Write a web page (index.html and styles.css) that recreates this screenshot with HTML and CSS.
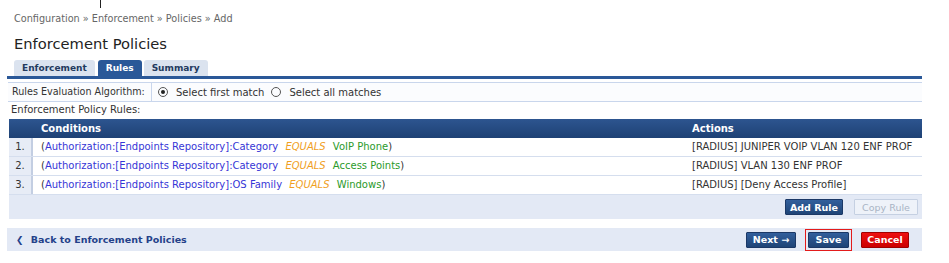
FILE: index.html
```html
<!DOCTYPE html>
<html lang="en">

<head>
  <meta charset="UTF-8">
  <title>Enforcement Policies</title>
  <link rel="stylesheet" href="styles.css">
</head>

<body>
  <div class="cursor-mark"></div>

  <div class="crumbs">Configuration &raquo; Enforcement &raquo; Policies &raquo; Add</div>
  <h2 class="page-title">Enforcement Policies</h2>

  <div class="tabs">
    <div class="tab">Enforcement</div>
    <div class="tab active">Rules</div>
    <div class="tab">Summary</div>
  </div>

  <div class="algo-row">
    <div class="algo-label">Rules Evaluation Algorithm:</div>
    <div class="algo-options">
      <span class="radio checked"></span><span class="opt">Select first match</span>
      <span class="radio"></span><span class="opt">Select all matches</span>
    </div>
  </div>

  <div class="section-label">Enforcement Policy Rules:</div>

  <div class="rules">
    <div class="rules-head">
      <div class="col-num"></div>
      <div class="col-cond">Conditions</div>
      <div class="col-act">Actions</div>
    </div>
    <div class="rule-row">
      <div class="col-num">1.</div>
      <div class="col-cond">(<span class="attr">Authorization:[Endpoints Repository]:Category</span> <span class="op">EQUALS</span> <span class="val">VoIP Phone</span>)</div>
      <div class="col-act">[RADIUS] JUNIPER VOIP VLAN 120 ENF PROF</div>
    </div>
    <div class="rule-row">
      <div class="col-num">2.</div>
      <div class="col-cond">(<span class="attr">Authorization:[Endpoints Repository]:Category</span> <span class="op">EQUALS</span> <span class="val">Access Points</span>)</div>
      <div class="col-act">[RADIUS] VLAN 130 ENF PROF</div>
    </div>
    <div class="rule-row">
      <div class="col-num">3.</div>
      <div class="col-cond">(<span class="attr">Authorization:[Endpoints Repository]:OS Family</span> <span class="op">EQUALS</span> <span class="val">Windows</span>)</div>
      <div class="col-act">[RADIUS] [Deny Access Profile]</div>
    </div>
    <div class="rules-foot">
      <button class="btn btn-blue" type="button">Add Rule</button>
      <button class="btn btn-off" type="button">Copy Rule</button>
    </div>
  </div>

  <div class="bottom-bar">
    <a class="back-link" href="#"><span class="chev">&#10094;</span> Back to Enforcement Policies</a>
    <div class="actions">
      <button class="btn btn-blue btn-next" type="button">Next &rarr;</button>
      <span class="focus-box"><button class="btn btn-blue btn-save" type="button">Save</button></span>
      <button class="btn btn-red" type="button">Cancel</button>
    </div>
  </div>
</body>

</html>
```

FILE: styles.css
```css
body {
  font-family: 'DejaVu Sans', Verdana, sans-serif;
  font-size: 10px;
  color: #333;
  margin: 0;
  padding: 0 27px 0 7px;
  width: 915px;
  position: relative;
}

.cursor-mark {
  position: absolute;
  left: 100px;
  top: 0;
  width: 1px;
  height: 8px;
  background: #222;
}

.crumbs {
  color: #666;
  padding: 13px 0 0 7px;
  height: 13px;
  font-size: 9.7px;
}

.page-title {
  font-size: 14.7px;
  font-weight: normal;
  margin: 0;
  padding: 9px 0 0 7px;
  height: 25px;
  color: #222;
}

.tabs {
  display: flex;
  padding-left: 7px;
  border-bottom: 3px solid #2a5898;
}

.tab {
  background: #dbe3ef;
  color: #233a5e;
  font-weight: bold;
  font-size: 9px;
  padding: 0 8px;
  height: 16px;
  line-height: 16px;
  border-radius: 3px 3px 0 0;
  margin-right: 3px;
}

.tab.active {
  background: #2a5898;
  color: #fff;
  margin-right: 2px;
}

.algo-row {
  display: flex;
  margin: 3px 0 0 1px;
  height: 18px;
  border-top: 1px solid #c9d6ec;
  border-bottom: 1px solid #c9d6ec;
  background: #fbfcfe;
}

.algo-label {
  width: 139px;
  padding-left: 4px;
  line-height: 18px;
  font-size: 9.6px;
  white-space: nowrap;
  border-right: 1px solid #c9d6ec;
}

.algo-options {
  display: flex;
  align-items: center;
  padding-left: 6px;
}

.radio {
  width: 10px;
  height: 10px;
  border: 1px solid #555;
  border-radius: 50%;
  box-sizing: border-box;
  position: relative;
  margin-right: 8px;
}

.radio.checked:after {
  content: '';
  position: absolute;
  left: 2px;
  top: 2px;
  width: 4px;
  height: 4px;
  border-radius: 50%;
  background: #222;
}

.opt {
  margin-right: 7px;
}

.section-label {
  padding: 2px 0 0 4px;
  height: 15px;
}

.rules {
  margin-left: 2px;
  width: 913px;
}

.rules-head {
  display: flex;
  height: 19px;
  line-height: 19px;
  color: #fff;
  font-weight: bold;
  background: linear-gradient(#2d5590, #1e4174);
}

.rules-head .col-cond {
  padding-left: 8px;
}

.col-num {
  width: 24px;
  flex: none;
  text-align: center;
}

.col-cond {
  flex: 1;
  padding-left: 8px;
}

.col-act {
  width: 230px;
  flex: none;
}

.rule-row {
  display: flex;
  height: 18px;
  line-height: 18px;
  background: #fff;
  border-bottom: 1px solid #d5deee;
}

.rule-row .col-num {
  background: #e7ecf6;
  border-right: 2px solid #c3cee2;
  box-sizing: border-box;
  color: #333;
}

.attr {
  color: #3636d6;
}

.op {
  color: #f0a01e;
  font-style: italic;
  margin: 0 3px 0 4px;
}

.val {
  color: #2b9a2b;
  margin-left: 1px;
}

.rules-foot {
  display: flex;
  justify-content: flex-end;
  align-items: center;
  gap: 11px;
  height: 24px;
  padding-right: 4px;
  background: #e3e9f5;
}

.btn {
  font-family: inherit;
  font-size: 9.5px;
  font-weight: bold;
  height: 16px;
  padding: 0 4px;
  border: 1px solid #1b3866;
  border-radius: 1px;
  color: #fff;
  cursor: pointer;
}

.btn-blue {
  background: linear-gradient(#325f9c, #1f4476);
}

.btn-next {
  width: 50px;
}

.btn-save {
  width: 41px;
}

.btn-off {
  background: #eef2f9;
  border-color: #c5d0e2;
  color: #a9b4c5;
  font-weight: normal;
  width: 64px;
}

.btn-red {
  background: linear-gradient(#ee1010, #cc0000);
  border-color: #a00000;
  width: 48px;
}

.bottom-bar {
  display: flex;
  justify-content: space-between;
  align-items: center;
  height: 23px;
  margin-top: 9px;
  background: #e3e9f5;
  padding-right: 13px;
}

.back-link {
  color: #24418a;
  font-weight: bold;
  font-size: 9.5px;
  text-decoration: none;
  padding-left: 9px;
}

.chev {
  font-size: 9px;
  margin-right: 4px;
}

.actions {
  display: flex;
  align-items: center;
  gap: 9px;
}

.focus-box {
  border: 1px solid #e31b1b;
  padding: 2px;
  display: flex;
}
```
